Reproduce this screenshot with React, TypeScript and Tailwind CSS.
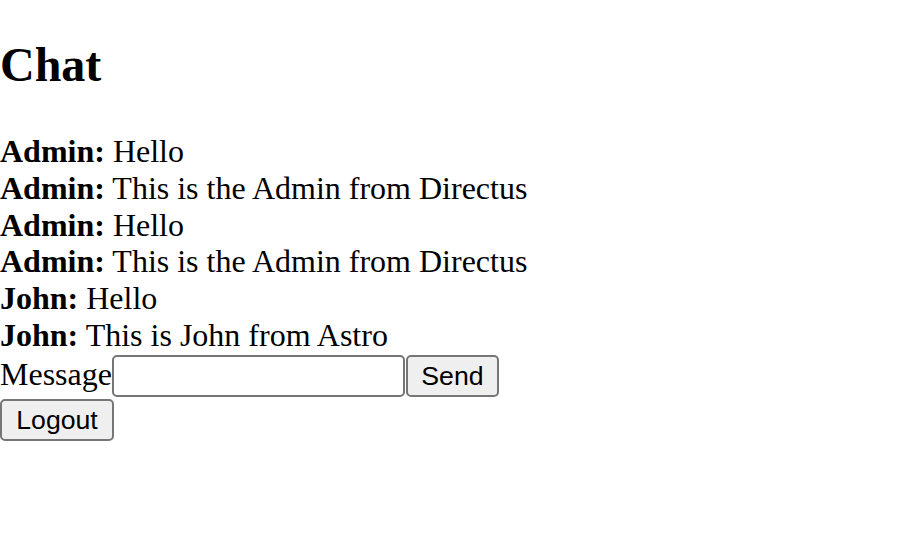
import React, { useState } from "react";

type Msg = { user: string; text: string };

const messages: Msg[] = [
  { user: "Admin", text: "Hello" },
  { user: "Admin", text: "This is the Admin from Directus" },
  { user: "Admin", text: "Hello" },
  { user: "Admin", text: "This is the Admin from Directus" },
  { user: "John", text: "Hello" },
  { user: "John", text: "This is John from Astro" },
];

export default function App() {
  const [draft, setDraft] = useState("");

  return (
    <section className="pt-[37px] bg-white text-black text-[32px] leading-[36.8px] font-['Liberation_Serif',serif]">
      <h1 className="mb-[41px] text-[48px] leading-[55px] font-bold">Chat</h1>
      <div>
        {messages.map((m, i) => (
          <div key={i}>
            <strong className="font-bold">{m.user}:</strong> {m.text}
          </div>
        ))}
      </div>
      <form className="mt-[1px]" onSubmit={(e) => e.preventDefault()}>
        <label htmlFor="message">Message</label>
        <input
          id="message"
          value={draft}
          onChange={(e) => setDraft(e.target.value)}
          className="inline-block align-baseline w-[293px] h-[42px] px-[4px] border-2 border-[#767676] rounded-[5px] bg-white text-[26.67px] font-['Liberation_Sans',sans-serif]"
        />
        <button
          type="submit"
          className="inline-block align-baseline w-[93px] h-[42px] ml-[1px] border-2 border-[#767676] rounded-[5px] bg-[#efefef] text-[26.67px] leading-[30px] font-['Liberation_Sans',sans-serif]"
        >
          Send
        </button>
      </form>
      <div className="mt-[2px]">
        <button className="inline-block w-[114px] h-[42px] border-2 border-[#767676] rounded-[5px] bg-[#efefef] text-[26.67px] leading-[30px] font-['Liberation_Sans',sans-serif]">
          Logout
        </button>
      </div>
    </section>
  );
}
